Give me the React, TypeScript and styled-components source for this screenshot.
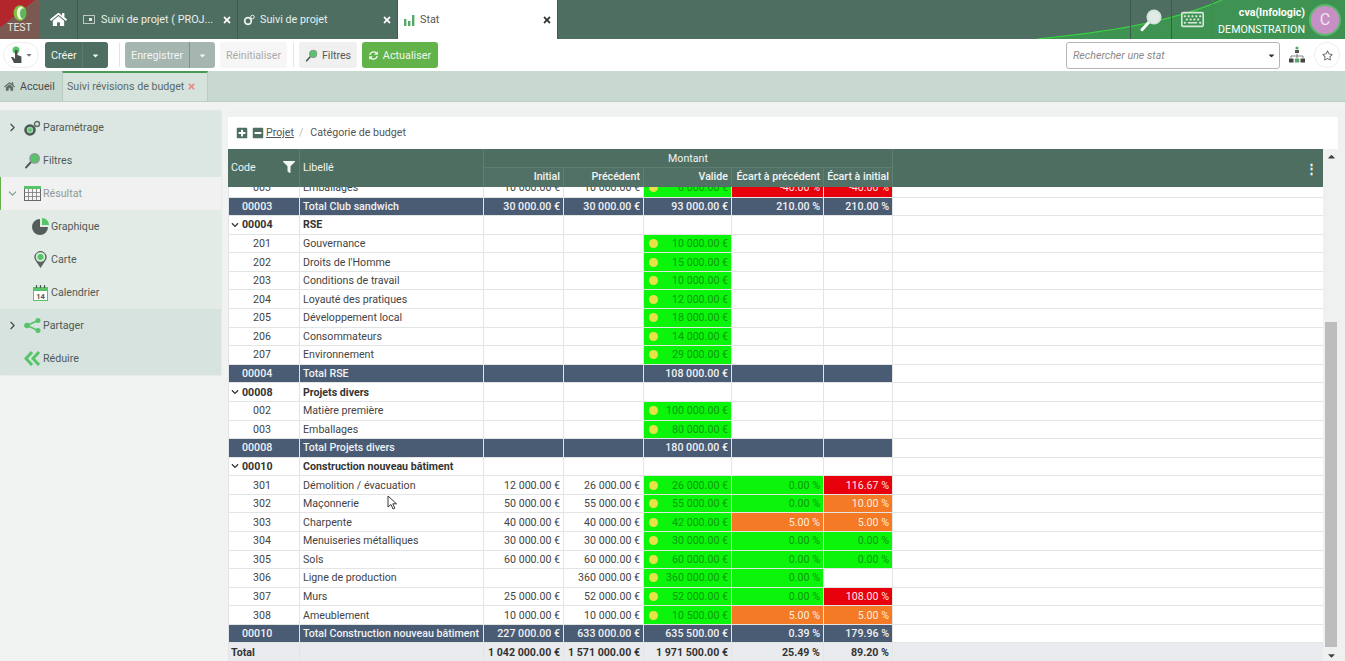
import React from "react";
import styled, { createGlobalStyle } from "styled-components";
import { FaHome, FaTimes, FaChevronDown, FaFilter, FaSyncAlt, FaRegStar, FaRegKeyboard, FaCaretDown, FaPlusSquare, FaMinusSquare, FaCaretUp } from "react-icons/fa";
import { LuChevronRight, LuChevronDown } from "react-icons/lu";

const Global = createGlobalStyle`
  html, body { margin: 0; padding: 0; height: 100%; overflow: hidden; background: #f1f3f2; }
  body { font-family: Roboto, "Liberation Sans", sans-serif; font-size: 10.65px; color: #444; }
  * { box-sizing: border-box; }
`;

const Page = styled.div`position: relative; width: 1345px; height: 661px; overflow: hidden; display: flex; flex-direction: column;`;

/* ---------- top bar ---------- */
const TopBar = styled.header`position: relative; height: 39px; background: #4f6e62; display: flex; flex: none; color: #fff;`;
const Corner = styled.svg`position: absolute; right: 0; top: 0; width: 308px; height: 39px;`;
const LogoBox = styled.div`width: 39px; height: 39px; position: relative; overflow: hidden; background: linear-gradient(142deg, #b3262c 0 39%, #7b5950 40%); display: flex; flex-direction: column; align-items: center; font-size: 10.5px; color: #e8e8e8; svg { margin-top: 5px; } span { line-height: 13px; }`;
const HomeTab = styled.div`width: 39px; display: flex; align-items: center; justify-content: center; border-right: 1px solid #41594f; font-size: 17px;`;
const Tab = styled.div<{ $active?: boolean }>`
  width: 160px; display: flex; align-items: center; gap: 5px; padding: 0 5px; font-size: 10.8px;
  border-right: 1px solid #41594f;
  background: ${(p) => (p.$active ? "#fff" : "transparent")};
  color: ${(p) => (p.$active ? "#555" : "#e8efec")};
`;
const TabLabel = styled.span`flex: 1; white-space: nowrap; overflow: hidden;`;
const TabClose = styled(FaTimes)<{ $dark?: boolean }>`font-size: 10px; color: ${(p) => (p.$dark ? "#333" : "#fff")}; flex: none;`;
const TopRight = styled.div`position: relative; margin-left: auto; display: flex; height: 39px;`;
const TopIcon = styled.div`width: 41px; display: flex; align-items: center; justify-content: center; border-left: 1px solid #3e5a4e;`;
const UserBox = styled.div`width: 133px; display: flex; align-items: center; justify-content: flex-end; padding-right: 4px; gap: 4px; border-left: 1px solid #3e8c4c; `;
const UserText = styled.div`text-align: right; line-height: 17px; font-size: 10.65px; padding-top: 3px; strong { display: block; font-weight: 700; }`;
const Avatar = styled.div`width: 32px; height: 32px; border-radius: 50%; background: #c690c4; border: 2px solid #5bb86a; color: #f3e4f2; font-size: 16px; display: flex; align-items: center; justify-content: center;`;

/* ---------- toolbar ---------- */
const Toolbar = styled.div`height: 32px; background: #fff; display: flex; align-items: center; flex: none; padding-left: 3px;`;
const RoundBtn = styled.div`width: 36px; height: 26px; border-radius: 13px; border: 1px solid #eee; display: flex; align-items: center; justify-content: center; gap: 2px; color: #777; font-size: 8px;`;
const SplitBtn = styled.div<{ $muted?: boolean; $ml?: number; $w: number }>`
  display: flex; width: ${(p) => p.$w}px; height: 26px; margin-left: ${(p) => p.$ml ?? 0}px; border-radius: 3px; overflow: hidden; color: #f2f5f4; font-size: 10.8px;
  background: ${(p) => (p.$muted ? "#a5b5af" : "#4f6e62")};
`;
const SplitMain = styled.div`flex: 1; padding-left: 6px; display: flex; align-items: center;`;
const SplitCaret = styled.div<{ $w: number; $line?: boolean }>`
  width: ${(p) => p.$w}px; display: flex; align-items: center; justify-content: center; font-size: 9px;
  border-left: 1px solid ${(p) => (p.$line ? "#7f918a" : "#5c7a6e")};
`;
const Sep = styled.div<{ $mx: string }>`width: 1px; height: 24px; background: #e3e3e3; margin: ${(p) => p.$mx};`;
const PlainBtn = styled.div<{ $disabled?: boolean; $w: number; $ml?: number }>`
  height: 26px; width: ${(p) => p.$w}px; margin-left: ${(p) => p.$ml ?? 0}px; border-radius: 3px; display: flex; align-items: center; justify-content: center; gap: 4px;
  background: ${(p) => (p.$disabled ? "#f6f6f6" : "#f0f0f0")}; color: ${(p) => (p.$disabled ? "#aaa" : "#555")};
`;
const GreenBtn = styled.div`height: 26px; width: 76px; margin-left: 5px; border-radius: 3px; background: #62b34a; color: #eef7ea; display: flex; align-items: center; justify-content: center; gap: 5px; font-size: 10.8px; svg { font-size: 9px; }`;
const SearchBox = styled.div`margin-left: auto; width: 214px; height: 27px; border: 1px solid #b5b5b5; border-radius: 3px; display: flex; align-items: center; justify-content: space-between; padding: 0 3px 0 6px; font-style: italic; color: #8a8a8a; svg { color: #333; font-size: 9px; }`;
const OrgSlot = styled.div`width: 34px; display: flex; justify-content: center;`;
const StarBtn = styled.div`width: 26px; height: 26px; border-radius: 50%; border: 1px solid #eee; display: flex; align-items: center; justify-content: center; color: #666; font-size: 11px; margin-right: 5px;`;

/* ---------- menu tabs ---------- */
const MenuTabs = styled.div`height: 31px; background: #c8d9d2; display: flex; flex: none; border-bottom: 1px solid #bccfc7;`;
const HomeCrumb = styled.div`width: 62px; padding: 1px 0 0 4px; display: flex; align-items: center; gap: 5px; color: #4a4a4a; svg { font-size: 11px; color: #5e6f68; }`;
const BudgetTab = styled.div`width: 146px; background: #d6e3dd; border-top: 2px solid #4b9a57; border-right: 1px solid #b8ccc3; border-left: 1px solid #b8ccc3; padding: 0 0 1px 4px; display: flex; align-items: center; gap: 3px; color: #5a6a64; svg { color: #e98a8a; font-size: 9px; }`;

/* ---------- body ---------- */
const Main = styled.div`flex: 1; display: flex; min-height: 0;`;
const Side = styled.aside`width: 221px; height: 264px; margin-top: 9px; flex: none; display: flex; flex-direction: column; box-shadow: 0 0 2px #d0d8d4;`;
const SideGroup = styled.div<{ $bg: string }>`background: ${(p) => p.$bg}; display: flex; flex-direction: column;`;
const SideItem = styled.div<{ $sel?: boolean; $depth?: boolean }>`
  height: 33px; display: flex; align-items: center; color: ${(p) => (p.$sel ? "#8c9a95" : "#4e5a56")};
  padding-left: ${(p) => (p.$depth ? 29 : 6)}px;
  ${(p) => p.$sel && "background: #f1f1f1; border-left: 1px solid #62b34a; padding-left: 5px;"}
`;
const Arrow = styled.span`width: 15px; display: flex; color: #444; font-size: 13px; flex: none;`;
const SideIcon = styled.span`width: 22px; height: 20px; display: flex; align-items: center; justify-content: center; flex: none;`;
const SideLabel = styled.span``;

const Content = styled.section`margin: 8px 0 0 7px; width: 1117px; display: flex; flex-direction: column; min-height: 0; background: #eff1f0;`;
const Breadcrumb = styled.div`height: 32px; margin-top: 7px; padding: 0 0 1px 8px; background: #fff; display: flex; align-items: center; gap: 4px; flex: none; color: #555; width: 1110px; a { text-decoration: underline; color: #555; margin-left: -2px; } i { color: #bbb; font-style: normal; margin: 0 3px 0 1px; } svg { color: #4f6e62; font-size: 12px; }`;
const TableWrap = styled.div`flex: 1; display: flex; min-height: 0;`;
const Table = styled.div`width: 1095px; display: flex; flex-direction: column; position: relative; background: #fff;`;
const cols = "71px 184px 80px 80px 88px 92px 69px 1fr";
const Head = styled.div`display: grid; grid-template-columns: ${cols}; grid-template-rows: 18px 20px; height: 38px; background: #4f6e62; color: #f1f5f3; flex: none;`;
const HeadCell = styled.div<{ $area: string; $right?: boolean; $center?: boolean; $line?: boolean; $tall?: boolean }>`
  grid-area: ${(p) => p.$area}; display: flex; align-items: center; padding: ${(p) => (p.$tall ? "0 3px 2px" : "0 3px")};
  justify-content: ${(p) => (p.$right ? "flex-end" : p.$center ? "center" : "space-between")};
  ${(p) => p.$right && "font-weight: 500; background: #527166; border-top: 1px solid #5f7d71; padding-bottom: 2px;"}
  ${(p) => p.$line && "border-left: 1px solid #5f7d71;"}
  white-space: nowrap;
`;
const HeadFilter = styled(FaFilter)`font-size: 12px; margin-right: 1px;`;
const Kebab = styled.div`grid-area: 1 / 8 / 3 / 9; display: flex; align-items: center; justify-content: flex-end; padding-right: 5px; font-size: 13px; font-weight: 700; border-left: 1px solid #5f7d71;`;
const Scroller = styled.div`flex: 1; overflow: hidden; min-height: 0;`;
const Inner = styled.div`margin-top: -8px;`;
const Row = styled.div<{ $kind: string }>`
  display: grid; grid-template-columns: ${cols}; height: 18.58px;
  border-bottom: 1px solid #e2e5e4;
  font-weight: ${(p) => (p.$kind === "group" || p.$kind === "grand" ? 700 : p.$kind === "total" ? 500 : 400)};
  ${(p) => p.$kind === "grand" && "background: #e9ebef; color: #333; border-bottom: none;"}
  ${(p) => p.$kind === "group" && "color: #333;"}
`;
const toneBg: Record<string, string> = { g: "#0af50a", r: "#e8000c", o: "#f57a26", t: "#4a5c74" };
const toneFg: Record<string, string> = { g: "#0b9a0b", r: "#fbe3e3", o: "#fdeede", t: "#f0f2f5" };
const Cell = styled.div<{ $tone?: string; $right?: boolean; $pad?: number }>`
  display: flex; align-items: center; white-space: nowrap; overflow: hidden;
  justify-content: ${(p) => (p.$right ? "flex-end" : "flex-start")};
  padding: 0 3px 0 ${(p) => p.$pad ?? 3}px;
  background: ${(p) => (p.$tone ? toneBg[p.$tone] : "transparent")};
  color: ${(p) => (p.$tone ? toneFg[p.$tone] : "inherit")};
  border-left: 1px solid #e2e5e4;
  gap: 3px;
  svg { font-size: 8px; flex: none; color: #333; }
`;
const Dot = styled.span`width: 9px; height: 9px; border-radius: 50%; background: #e8e24a; margin: 0 auto 0 2px; flex: none;`;
const Rail = styled.div`width: 15px; position: relative; background: #eff0f0; flex: none;`;
const Thumb = styled.div`position: absolute; right: 1px; left: 2px; top: 173px; bottom: 14px; background: #bdbdbd;`;
const RailCaret = styled.span<{ $bottom?: boolean }>`position: absolute; left: 3px; ${(p) => (p.$bottom ? "bottom: 0;" : "top: 2px;")} font-size: 11px; color: #444; display: flex;`;
const Pointer = styled.svg`position: absolute; left: 387px; top: 495px; width: 10px; height: 15px;`;

const Loupe = ({ s = 16, lens = "#58c46a", ring = "#8a9a94", handle = "#4d5a55" }: { s?: number; lens?: string; ring?: string; handle?: string }) => (
  <svg width={s} height={s} viewBox="0 0 16 16"><path d="M7 9 2 14.500" stroke={handle} strokeWidth="2" strokeLinecap="round" /><circle cx="10" cy="6" r="4.400" fill={lens} stroke={ring} strokeWidth="1.300" /></svg>
);

const M = (n: string) => `${n} €`;
type R = { k: string; code?: string; label?: string; i?: string; p?: string; v?: string; e1?: string; e2?: string; t1?: string; t2?: string };
const leaf = (code: string, label: string, i: string, p: string, v: string, e1 = "", t1 = "", e2 = "", t2 = ""): R => ({ k: "leaf", code, label, i: i && M(i), p: p && M(p), v: M(v), e1, t1, e2, t2 });
const rows: R[] = [
  leaf("003", "Emballages", "10 000.00", "10 000.00", "6 000.00", "-40.00 %", "r", "-40.00 %", "r"),
  { k: "total", code: "00003", label: "Total Club sandwich", i: M("30 000.00"), p: M("30 000.00"), v: M("93 000.00"), e1: "210.00 %", e2: "210.00 %" },
  { k: "group", code: "00004", label: "RSE" },
  leaf("201", "Gouvernance", "", "", "10 000.00"),
  leaf("202", "Droits de l'Homme", "", "", "15 000.00"),
  leaf("203", "Conditions de travail", "", "", "10 000.00"),
  leaf("204", "Loyauté des pratiques", "", "", "12 000.00"),
  leaf("205", "Développement local", "", "", "18 000.00"),
  leaf("206", "Consommateurs", "", "", "14 000.00"),
  leaf("207", "Environnement", "", "", "29 000.00"),
  { k: "total", code: "00004", label: "Total RSE", v: M("108 000.00") },
  { k: "group", code: "00008", label: "Projets divers" },
  leaf("002", "Matière première", "", "", "100 000.00"),
  leaf("003", "Emballages", "", "", "80 000.00"),
  { k: "total", code: "00008", label: "Total Projets divers", v: M("180 000.00") },
  { k: "group", code: "00010", label: "Construction nouveau bâtiment" },
  leaf("301", "Démolition / évacuation", "12 000.00", "26 000.00", "26 000.00", "0.00 %", "g", "116.67 %", "r"),
  leaf("302", "Maçonnerie", "50 000.00", "55 000.00", "55 000.00", "0.00 %", "g", "10.00 %", "o"),
  leaf("303", "Charpente", "40 000.00", "40 000.00", "42 000.00", "5.00 %", "o", "5.00 %", "o"),
  leaf("304", "Menuiseries métalliques", "30 000.00", "30 000.00", "30 000.00", "0.00 %", "g", "0.00 %", "g"),
  leaf("305", "Sols", "60 000.00", "60 000.00", "60 000.00", "0.00 %", "g", "0.00 %", "g"),
  leaf("306", "Ligne de production", "", "360 000.00", "360 000.00", "0.00 %", "g"),
  leaf("307", "Murs", "25 000.00", "52 000.00", "52 000.00", "0.00 %", "g", "108.00 %", "r"),
  leaf("308", "Ameublement", "10 000.00", "10 000.00", "10 500.00", "5.00 %", "o", "5.00 %", "o"),
  { k: "total", code: "00010", label: "Total Construction nouveau bâtiment", i: M("227 000.00"), p: M("633 000.00"), v: M("635 500.00"), e1: "0.39 %", e2: "179.96 %" },
  { k: "grand", code: "Total", label: "", i: M("1 042 000.00"), p: M("1 571 000.00"), v: M("1 971 500.00"), e1: "25.49 %", e2: "89.20 %" },
];

const DataRow = ({ r }: { r: R }) => {
  const t = r.k === "total" ? "t" : undefined;
  const pad = r.k === "leaf" ? 24 : r.k === "total" ? 13 : 2;
  return (
    <Row $kind={r.k}>
      <Cell $tone={t} $pad={pad}>{r.k === "group" && <FaChevronDown />}{r.code}</Cell>
      <Cell $tone={t}>{r.label}</Cell>
      <Cell $tone={t} $right>{r.i}</Cell>
      <Cell $tone={t} $right>{r.p}</Cell>
      <Cell $tone={r.k === "leaf" ? "g" : t} $right>{r.k === "leaf" && <Dot />}{r.v}</Cell>
      <Cell $tone={r.t1 || t} $right>{r.e1}</Cell>
      <Cell $tone={r.t2 || t} $right>{r.e2}</Cell>
      <Cell />
    </Row>
  );
};

const Gears = () => (
  <svg width="18" height="16" viewBox="0 0 18 16"><circle cx="7" cy="10" r="4.500" fill="#9fd6aa" stroke="#4d5a55" strokeWidth="2.600" /><circle cx="7" cy="10" r="1.800" fill="#58c46a" /><circle cx="14" cy="4" r="2.500" fill="none" stroke="#5c6a65" strokeWidth="1.400" /></svg>
);
const Gears2 = () => (
  <svg width="12" height="12" viewBox="0 0 12 12"><circle cx="5" cy="7" r="3.300" fill="none" stroke="#e8efec" strokeWidth="1.800" /><circle cx="9.500" cy="3" r="1.800" fill="none" stroke="#e8efec" strokeWidth="1" /></svg>
);
const GridIcon = () => (
  <svg width="17" height="15" viewBox="0 0 17 15"><rect x="0.500" y="0.500" width="16" height="14" fill="#f5f5f5" stroke="#666" /><rect x="0" y="0" width="17" height="3" fill="#58c46a" /><path d="M0 6.500h17M0 10.500h17M4.500 3v12M8.500 3v12M12.500 3v12" stroke="#777" strokeWidth=".8" /></svg>
);
const Pie = () => (
  <svg width="17" height="17" viewBox="0 0 17 17"><path d="M8 1a8 8 0 1 0 8 8H8z" fill="#555d5a" /><path d="M10 0a7 7 0 0 1 7 7h-7z" fill="#58c46a" /></svg>
);
const Pin = () => (
  <svg width="13" height="17" viewBox="0 0 13 17"><path d="M6.500 17 1.500 9.500a6 6 0 1 1 10 0z" fill="#5a6562" /><circle cx="6.500" cy="6" r="4.800" fill="#d5f0da" /><circle cx="6.500" cy="6" r="3" fill="#58c46a" /></svg>
);
const Cal = () => (
  <svg width="15" height="16" viewBox="0 0 15 16"><rect x=".5" y="2.500" width="14" height="13" fill="#fff" stroke="#58c46a" /><rect x="0" y="2" width="15" height="4" fill="#58c46a" /><path d="M3.500 0v3M7.500 0v3M11.500 0v3" stroke="#4d5a55" strokeWidth="1.200" /><text x="7.500" y="14" fontSize="7.500" fontWeight="700" fontFamily="Roboto" textAnchor="middle" fill="#555">14</text></svg>
);
const Share = () => (
  <svg width="17" height="15" viewBox="0 0 17 15"><path d="M14 2.500 3 7.500l11 5" stroke="#58c46a" strokeWidth="1.600" fill="none" /><circle cx="3" cy="7.500" r="2.800" fill="#58c46a" /><circle cx="14" cy="2.500" r="2.500" fill="#58c46a" /><circle cx="14" cy="12.500" r="2.500" fill="#58c46a" /></svg>
);
const Reduce = () => (
  <svg width="17" height="15" viewBox="0 0 17 15"><path d="M8 1 2 7.500 8 14M15 1 9 7.500 15 14" stroke="#58c46a" strokeWidth="3" fill="none" /></svg>
);

export default function App() {
  return (
    <Page>
      <Global />
      <TopBar>
        <LogoBox>
          <svg width="14" height="16" viewBox="0 0 14 16"><ellipse cx="7" cy="8" rx="6.500" ry="7.800" fill="#7cc23f" /><ellipse cx="8" cy="8" rx="4.200" ry="6.500" fill="#f1f6dc" /><ellipse cx="10" cy="8.500" rx="3" ry="5.200" fill="#5cb85c" /></svg>
          <span>TEST</span>
        </LogoBox>
        <HomeTab><FaHome /></HomeTab>
        <Tab>
          <svg width="13" height="11" viewBox="0 0 13 11"><rect x=".5" y="1.500" width="11" height="8" fill="none" stroke="#b9c9c2" /><rect x="6" y="4" width="3" height="3" fill="#dfe8e4" /></svg>
          <TabLabel>Suivi de projet ( PROJ...</TabLabel><TabClose />
        </Tab>
        <Tab>
          <Gears2 />
          <TabLabel>Suivi de projet</TabLabel><TabClose />
        </Tab>
        <Tab $active>
          <svg width="12" height="12" viewBox="0 0 12 12"><path d="M1 5h2.400v7H1zM5 7h2.400v5H5zM9 1h2.400v11H9z" fill="#58a868" /></svg>
          <TabLabel>Stat</TabLabel><TabClose $dark />
        </Tab>
        <Corner viewBox="0 0 308 39" preserveAspectRatio="none"><path d="M0 39C60 33 130 24 185 0H308V39Z" fill="#3f9352" /><path d="M0 39C60 33 130 24 185 0" stroke="#36d83c" strokeWidth="1.200" fill="none" /></Corner>
        <TopRight>
          <TopIcon><Loupe s={24} lens="#dfece5" ring="#d5e4da" handle="#fff" /></TopIcon>
          <TopIcon><FaRegKeyboard size={23} color="#d6e8dc" /></TopIcon>
          <UserBox>
            <UserText><strong>cva(Infologic)</strong>DEMONSTRATION</UserText>
            <Avatar>C</Avatar>
          </UserBox>
        </TopRight>
      </TopBar>

      <Toolbar>
        <RoundBtn>
          <svg width="13" height="18" viewBox="0 0 13 18"><circle cx="6" cy="4" r="3.500" fill="#58c46a" /><path d="M5 4h2.400v5l4 1.500V17H4L1 11l2 0 2 2z" fill="#4a4f4d" /></svg>
          <FaCaretDown />
        </RoundBtn>
        <SplitBtn $ml={6} $w={63}><SplitMain>Créer</SplitMain><SplitCaret $w={26}><FaCaretDown /></SplitCaret></SplitBtn>
        <Sep $mx="0 5px 0 11px" />
        <SplitBtn $muted $w={90}><SplitMain>Enregistrer</SplitMain><SplitCaret $w={26} $line><FaCaretDown /></SplitCaret></SplitBtn>
        <PlainBtn $disabled $ml={5} $w={67}>Réinitialiser</PlainBtn>
        <Sep $mx="0 5px 0 6px" />
        <PlainBtn $w={58}><Loupe s={13} />Filtres</PlainBtn>
        <GreenBtn><FaSyncAlt />Actualiser</GreenBtn>
        <SearchBox>Rechercher une stat<FaCaretDown /></SearchBox>
        <OrgSlot>
          <svg width="18" height="18" viewBox="0 0 18 18"><circle cx="9" cy="2" r="1.600" fill="#58a868" /><rect x="7" y="4" width="4" height="3" fill="#555" /><path d="M9 7.500v2.500M3 12v-2h12v2M9 10v2" stroke="#666" strokeWidth=".8" fill="none" /><rect x="1" y="12.500" width="4.500" height="4" fill="#444" /><rect x="6.800" y="12.500" width="4.500" height="4" fill="#58a868" /><rect x="12.500" y="12.500" width="4.500" height="4" fill="#444" /></svg>
        </OrgSlot>
        <StarBtn><FaRegStar /></StarBtn>
      </Toolbar>

      <MenuTabs>
        <HomeCrumb><FaHome />Accueil</HomeCrumb>
        <BudgetTab>Suivi révisions de budget<FaTimes /></BudgetTab>
      </MenuTabs>

      <Main>
        <Side>
          <SideGroup $bg="#dce7e3">
            <SideItem><Arrow><LuChevronRight /></Arrow><SideIcon><Gears /></SideIcon><SideLabel>Paramétrage</SideLabel></SideItem>
            <SideItem><Arrow /><SideIcon><Loupe s={17} /></SideIcon><SideLabel>Filtres</SideLabel></SideItem>
          </SideGroup>
          <SideItem $sel><Arrow><LuChevronDown color="#7a9a8c" /></Arrow><SideIcon><GridIcon /></SideIcon><SideLabel>Résultat</SideLabel></SideItem>
          <SideGroup $bg="#e3ebe7">
            <SideItem $depth><SideIcon><Pie /></SideIcon><SideLabel>Graphique</SideLabel></SideItem>
            <SideItem $depth><SideIcon><Pin /></SideIcon><SideLabel>Carte</SideLabel></SideItem>
            <SideItem $depth><SideIcon><Cal /></SideIcon><SideLabel>Calendrier</SideLabel></SideItem>
          </SideGroup>
          <SideGroup $bg="#d6e3de">
            <SideItem><Arrow><LuChevronRight /></Arrow><SideIcon><Share /></SideIcon><SideLabel>Partager</SideLabel></SideItem>
            <SideItem><Arrow /><SideIcon><Reduce /></SideIcon><SideLabel>Réduire</SideLabel></SideItem>
          </SideGroup>
        </Side>
        <Content>
          <Breadcrumb>
            <FaPlusSquare /><FaMinusSquare /><a>Projet</a><i>/</i>Catégorie de budget
          </Breadcrumb>
          <TableWrap>
            <Table>
              <Head>
                <HeadCell $area="1 / 1 / 3 / 2" $tall>Code<HeadFilter /></HeadCell>
                <HeadCell $area="1 / 2 / 3 / 3" $line $tall>Libellé</HeadCell>
                <HeadCell $area="1 / 3 / 2 / 8" $center $line>Montant</HeadCell>
                <HeadCell $area="2 / 3 / 3 / 4" $right $line>Initial</HeadCell>
                <HeadCell $area="2 / 4 / 3 / 5" $right $line>Précédent</HeadCell>
                <HeadCell $area="2 / 5 / 3 / 6" $right $line>Valide</HeadCell>
                <HeadCell $area="2 / 6 / 3 / 7" $right $line>Écart à précédent</HeadCell>
                <HeadCell $area="2 / 7 / 3 / 8" $right $line>Écart à initial</HeadCell>
                <Kebab>⋮</Kebab>
              </Head>
              <Scroller>
                <Inner>
                  {rows.map((r, i) => <DataRow key={i} r={r} />)}
                </Inner>
              </Scroller>
            </Table>
            <Rail>
              <RailCaret><FaCaretUp /></RailCaret>
              <Thumb />
              <RailCaret $bottom><FaCaretDown /></RailCaret>
            </Rail>
          </TableWrap>
        </Content>
      </Main>
      <Pointer viewBox="0 0 10 15"><path d="M1 1v11l3-2.500 2 4.500 1.800-.8-2-4.400H9.500z" fill="#fff" stroke="#222" strokeWidth=".9" /></Pointer>
    </Page>
  );
}
